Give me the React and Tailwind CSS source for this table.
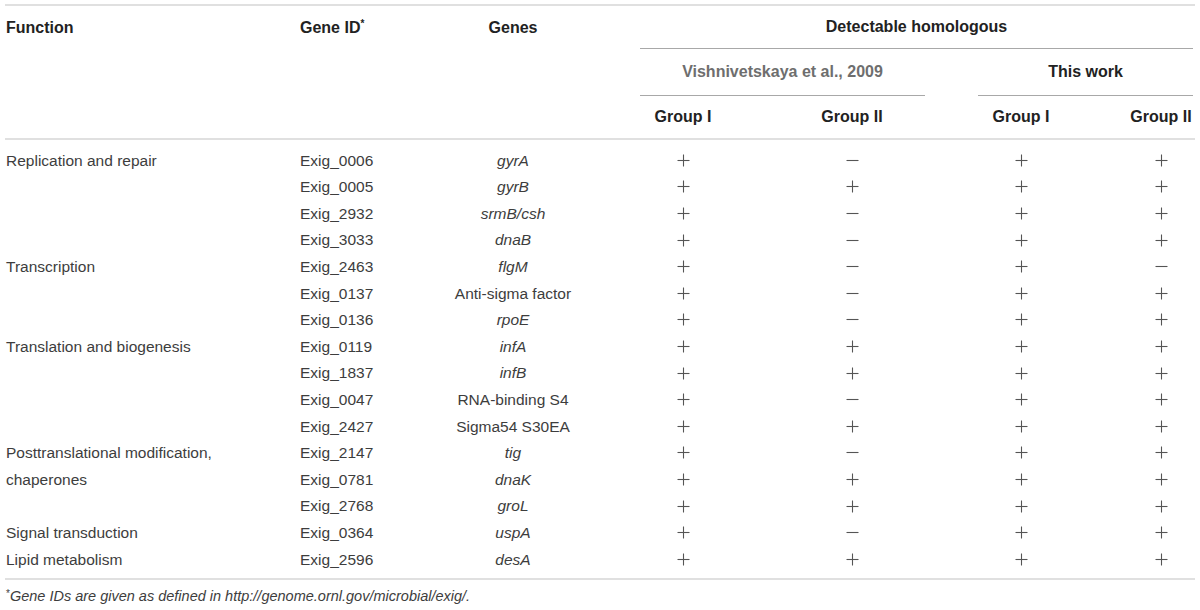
const rows = [
  ["Replication and repair", "Exig_0006", "gyrA", true, "+", "−", "+", "+"],
  ["", "Exig_0005", "gyrB", true, "+", "+", "+", "+"],
  ["", "Exig_2932", "srmB/csh", true, "+", "−", "+", "+"],
  ["", "Exig_3033", "dnaB", true, "+", "−", "+", "+"],
  ["Transcription", "Exig_2463", "flgM", true, "+", "−", "+", "−"],
  ["", "Exig_0137", "Anti-sigma factor", false, "+", "−", "+", "+"],
  ["", "Exig_0136", "rpoE", true, "+", "−", "+", "+"],
  ["Translation and biogenesis", "Exig_0119", "infA", true, "+", "+", "+", "+"],
  ["", "Exig_1837", "infB", true, "+", "+", "+", "+"],
  ["", "Exig_0047", "RNA-binding S4", false, "+", "−", "+", "+"],
  ["", "Exig_2427", "Sigma54 S30EA", false, "+", "+", "+", "+"],
  ["Posttranslational modification,", "Exig_2147", "tig", true, "+", "−", "+", "+"],
  ["chaperones", "Exig_0781", "dnaK", true, "+", "+", "+", "+"],
  ["", "Exig_2768", "groL", true, "+", "+", "+", "+"],
  ["Signal transduction", "Exig_0364", "uspA", true, "+", "−", "+", "+"],
  ["Lipid metabolism", "Exig_2596", "desA", true, "+", "+", "+", "+"],
];

const cols = "grid grid-cols-[290px_125px_186px_154px_184px_154px_97px]";

function Mark({ v }) {
  return (
    <svg width="13" height="13" viewBox="0 0 13 13" className="block">
      <path d="M0.5 6.5H12.5" stroke="#555" strokeWidth="1.1" />
      {v === "+" && <path d="M6.5 0.5V12.5" stroke="#555" strokeWidth="1.1" />}
    </svg>
  );
}

export default function App() {
  return (
    <div className="w-[1200px] h-[610px] bg-white px-[5px] pt-[4px] font-['Liberation_Sans',Arial,sans-serif] text-[15.5px]">
      <div className="border-t-2 border-[#e0e0e0]" />
      {/* header */}
      <div className={`${cols} grid-rows-[43px_47px_42px] font-bold text-[16px] text-[#222] border-b-2 border-[#e0e0e0]`}>
        <div className="flex items-center pl-[1px]">Function</div>
        <div className="flex items-center pl-[5px]">
          Gene ID<span className="text-[10px] relative -top-[4px]">*</span>
        </div>
        <div className="flex items-center justify-center">Genes</div>
        <div className="col-span-4 ml-[34px] mr-[2px] flex items-center justify-center border-b border-[#a8a8a8]">
          Detectable homologous
        </div>

        <div className="col-span-3" />
        <div className="col-span-2 ml-[34px] mr-[19px] flex items-center justify-center border-b border-[#a8a8a8] text-[#6e6e6e]">
          Vishnivetskaya et al., 2009
        </div>
        <div className="col-span-2 ml-[34px] mr-[2px] flex items-center justify-center border-b border-[#a8a8a8]">
          This work
        </div>

        <div className="col-span-3" />
        <div className="flex items-center justify-center">Group I</div>
        <div className="flex items-center justify-center">Group II</div>
        <div className="flex items-center justify-center">Group I</div>
        <div className="flex items-center justify-center pl-[30px] pr-[1px]">Group II</div>
      </div>
      {/* body */}
      <div className="pt-[7px] pb-[5px] border-b-2 border-[#e0e0e0] text-[#3d3d3d]">
        {rows.map((r, i) => (
          <div key={i} className={`${cols} h-[26.6px] items-center`}>
            <div className="pl-[1px] whitespace-nowrap">{r[0]}</div>
            <div className="pl-[5px]">{r[1]}</div>
            <div className={`text-center ${r[3] ? "italic" : ""}`}>{r[2]}</div>
            <div className="flex justify-center"><Mark v={r[4]} /></div>
            <div className="flex justify-center"><Mark v={r[5]} /></div>
            <div className="flex justify-center"><Mark v={r[6]} /></div>
            <div className="flex justify-center pl-[30px] pr-[1px]"><Mark v={r[7]} /></div>
          </div>
        ))}
      </div>
      <div className="pt-[6px] pl-[1px] text-[14.5px] text-[#3d3d3d] italic">
        <span className="not-italic text-[10px] relative -top-[4px]">*</span>Gene IDs are given as defined in http://genome.ornl.gov/microbial/exig/.
      </div>
    </div>
  );
}
